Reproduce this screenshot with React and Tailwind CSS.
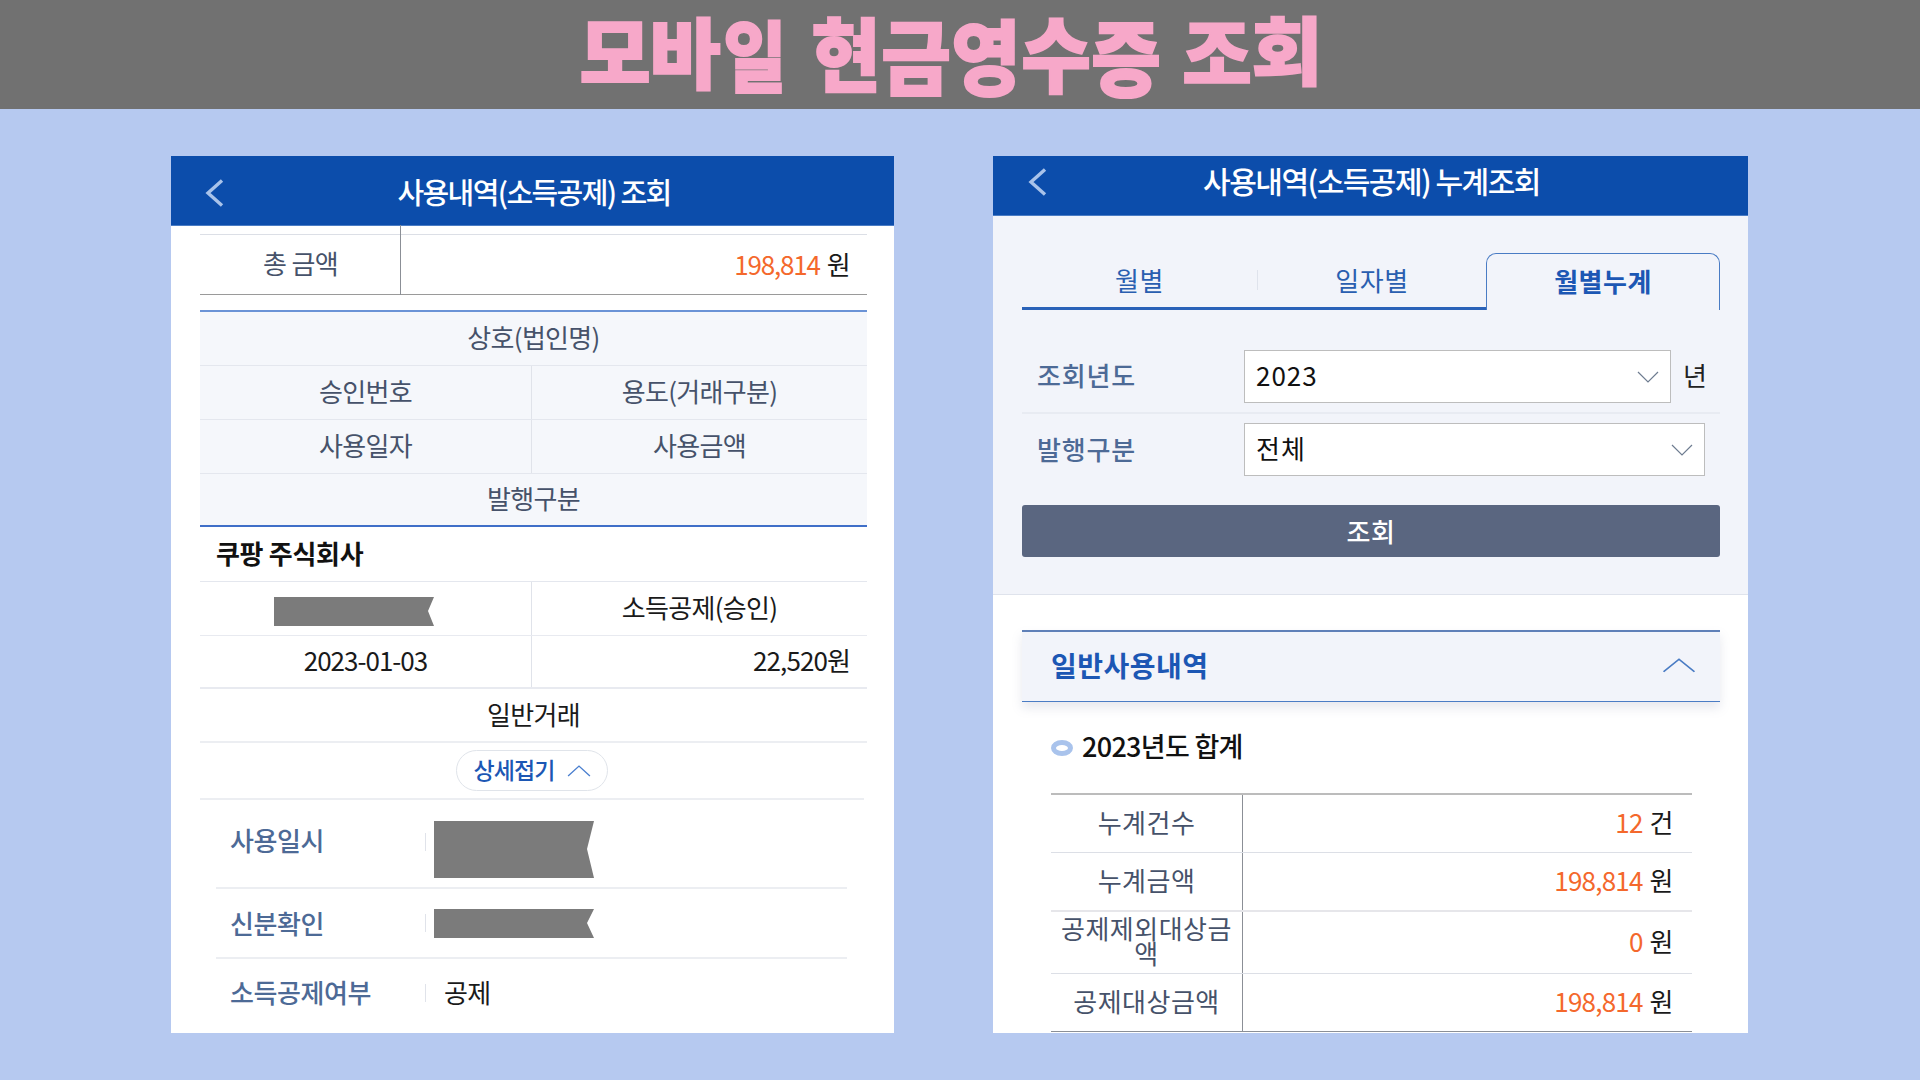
const KR = "font-['Noto_Sans_CJK_KR','Noto_Sans',sans-serif]";

function Chevron({ dir = "down", className = "" }) {
  const d = {
    down: "M1 1 L11 11 L21 1",
    up: "M1 11 L11 1 L21 11",
  }[dir];
  return (
    <svg viewBox="0 0 22 12" fill="none" stroke="currentColor" strokeWidth="1.2" preserveAspectRatio="none" className={className}>
      <path d={d} />
    </svg>
  );
}

function Back() {
  return (
    <svg viewBox="0 0 20 28" fill="none" stroke="#a9c3ea" strokeWidth="3.4" className="w-[20px] h-[28px]">
      <path d="M17 1.5 L3 14 L17 26.5" />
    </svg>
  );
}

const glyphs = [
  ["모", "[transform:translateY(-5px)_scale(.9,.9)]"],
  ["바", "[transform:translateY(-5px)_scale(.9,.9)]"],
  ["일", "[transform:translateY(-2px)_scale(.8,.9)]"],
  [" ", ""],
  ["현", "[transform:translateY(-4px)_scale(.88,.93)]"],
  ["금", "[transform:translateY(-2px)_scale(.88,.94)]"],
  ["영", "[transform:translateY(-1px)_scale(.88,.95)]"],
  ["수", "[transform:translateY(-4px)_scale(.88,.95)]"],
  ["증", "[transform:translateY(-1px)_scale(.88,.96)]"],
  [" ", ""],
  ["조", "[transform:translateY(-5px)_scale(.88,.88)]"],
  ["회", "[transform:translateY(-8px)_scale(.9,.86)]"],
];

function Title() {
  return (
    <h1 className="flex mr-[19px] text-[#f7a8c9] text-[86px] font-black leading-none [-webkit-text-stroke:2px_#f7a8c9]">
      {glyphs.map(([c, cls], i) =>
        c === " " ? (
          <span key={i} className="w-[21px] whitespace-pre"> </span>
        ) : (
          <span key={i} className={`w-[84px] -mx-[7px] flex justify-center ${cls}`}>{c}</span>
        )
      )}
    </h1>
  );
}

function Cell({ children, className = "" }) {
  return <div className={`flex items-center justify-center pb-[4px] ${className}`}>{children}</div>;
}

function LeftPanel() {
  const labelCls = "text-[#46526a]";
  return (
    <section className="w-[723px] h-[877px] bg-white flex flex-col overflow-hidden">
      <header className="relative h-[70px] shrink-0 bg-[#0c4dab] flex items-center justify-center border-b border-[#4a7cc4]">
        <span className="absolute left-[34px] top-[23px]"><Back /></span>
        <span className="text-white text-[29px] font-medium tracking-[-1.6px] ml-[3px] pt-[2px]">사용내역(소득공제) 조회</span>
      </header>
      <div className="ml-[29px] mr-[27px] flex flex-col text-[26px] tracking-[-0.7px]">
        <div className="h-[70px] mt-[-1px] flex pt-[9px] relative">
          <div className="flex-1 flex border-t border-b border-t-[#dcdfe6] border-b-[#9a9a9a]">
            <Cell className={`w-[201px] ${labelCls}`}>총 금액</Cell>
            <div className="flex-1 flex items-center justify-end pr-[17px] pb-[3px] text-[#1a1a1a]">
              <span className="text-[#f4682c] mr-[7px] tracking-[-1.2px]">198,814</span>원
            </div>
          </div>
          <span className="absolute left-[200px] top-0 bottom-0 w-px bg-[#8b8f96]" />
        </div>
        <div className="mt-[15px] border-t-2 border-[#6b93d6] bg-[#f5f7fb]">
          <Cell className={`h-[54px] border-b border-[#e4e7ee] ${labelCls}`}>상호(법인명)</Cell>
          <div className="h-[54px] flex border-b border-[#e4e7ee]">
            <Cell className={`w-[332px] border-r border-[#e0e3ea] ${labelCls}`}>승인번호</Cell>
            <Cell className={`flex-1 ${labelCls}`}>용도(거래구분)</Cell>
          </div>
          <div className="h-[54px] flex border-b border-[#e4e7ee]">
            <Cell className={`w-[332px] border-r border-[#e0e3ea] ${labelCls}`}>사용일자</Cell>
            <Cell className={`flex-1 ${labelCls}`}>사용금액</Cell>
          </div>
          <Cell className={`h-[53px] border-b-2 border-[#3f6fc8] ${labelCls}`}>발행구분</Cell>
        </div>
        <div className="h-[55px] pl-[16px] pb-[4px] flex items-center border-b border-[#e4e7ee] font-bold text-[#111] tracking-[-0.3px]">쿠팡 주식회사</div>
        <div className="h-[54px] flex border-b border-[#e8eaf0]">
          <div className="w-[332px] border-r border-[#e0e3ea] flex items-center pl-[74px] pt-[5px]">
            <svg viewBox="0 0 160 29" className="w-[160px] h-[29px]"><path d="M0 0H160L154 14L160 29H0Z" fill="#7b7b7b" /></svg>
          </div>
          <Cell className="flex-1 text-[#1a1a1a]">소득공제(승인)</Cell>
        </div>
        <div className="h-[53px] flex border-b-2 border-[#e8eaf0] text-[#1a1a1a]">
          <Cell className="w-[332px] border-r border-[#e0e3ea] tracking-[-1px]">2023-01-03</Cell>
          <div className="flex-1 flex items-center justify-end pr-[17px] pb-[4px] tracking-[-0.9px]">22,520원</div>
        </div>
        <Cell className="h-[54px] border-b-2 border-[#eceef2] text-[#1a1a1a]">일반거래</Cell>
        <div className="h-[57px] flex items-center justify-center border-b-2 border-[#eceef2] mr-[3px]">
          <div className="w-[152px] h-[41px] rounded-full border border-[#e0e4ea] flex items-center justify-center gap-[12px] text-[#1c57b4] text-[23px] font-medium tracking-[-0.9px]">
            <span className="pb-[2px]">상세접기</span>
            <Chevron dir="up" className="w-[24px] h-[12px] text-[#4a7fcf]" />
          </div>
        </div>
        <div className="h-[89px] ml-[16px] mr-[20px] flex items-center border-b-2 border-[#eceef2]">
          <span className="w-[209px] text-[#4d6a96] font-medium pb-[8px] pl-[14px] tracking-[-0.4px]">사용일시</span>
          <div className="w-px h-[18px] bg-[#e0e3ea] mb-[4px]" />
          <svg viewBox="0 0 160 57" className="ml-[8px] mt-[11px] w-[160px] h-[57px]"><path d="M0 0H160L153 28L160 57H0Z" fill="#7b7b7b" /></svg>
        </div>
        <div className="h-[70px] ml-[16px] mr-[20px] flex items-center border-b-2 border-[#eceef2]">
          <span className="w-[209px] text-[#4d6a96] font-medium pl-[14px] pb-[2px] tracking-[-0.4px]">신분확인</span>
          <div className="w-px h-[18px] bg-[#e0e3ea]" />
          <svg viewBox="0 0 160 29" className="ml-[8px] w-[160px] h-[29px]"><path d="M0 0H160L153 14L160 29H0Z" fill="#7b7b7b" /></svg>
        </div>
        <div className="h-[68px] ml-[16px] mr-[20px] flex items-center">
          <span className="w-[209px] text-[#4d6a96] font-medium pl-[14px] pb-[4px] tracking-[-0.4px]">소득공제여부</span>
          <div className="w-px h-[18px] bg-[#e0e3ea]" />
          <span className="ml-[18px] text-[#1a1a1a] pb-[4px]">공제</span>
        </div>
      </div>
    </section>
  );
}

function SelectBox({ value, className = "" }) {
  return (
    <div className={`h-[53px] bg-white border border-[#bdbdbd] flex items-center justify-between pl-[11px] pr-[11px] text-[#111] text-[26px] tracking-[1px] ${className}`}>
      <span className="pb-[5px]">{value}</span>
      <Chevron className="w-[22px] h-[12px] text-[#6e7c90]" />
    </div>
  );
}

function Stat({ label, value, unit, className = "" }) {
  return (
    <div className={`flex ${className}`}>
      <div className="w-[192px] flex items-center justify-center text-center px-[8px] pb-[5px] leading-[25px] text-[#46526a] border-r border-[#8b8f96]">{label}</div>
      <div className="flex-1 flex items-center justify-end pr-[18px] pb-[5px] text-[#1a1a1a]">
        <span className="text-[#f4682c] mr-[7px] tracking-[-0.8px]">{value}</span>{unit}
      </div>
    </div>
  );
}

function RightPanel() {
  return (
    <section className="w-[755px] h-[877px] bg-white flex flex-col overflow-hidden">
      <header className="relative h-[60px] shrink-0 bg-[#0c4dab] flex items-center justify-center border-b border-[#4a7cc4]">
        <span className="absolute left-[35px] top-[12px]"><Back /></span>
        <span className="text-white text-[30px] font-medium tracking-[-1.5px] pb-[10px] ml-[2px]">사용내역(소득공제) 누계조회</span>
      </header>
      <div className="h-[379px] shrink-0 bg-[#f2f4fa] border-b border-[#dfe3ec] pl-[29px] pr-[28px] text-[26px] tracking-[0.5px]">
        <div className="mt-[37px] h-[57px] flex text-[#2a5fb0]">
          <div className="flex-1 flex items-center border-b-[3px] border-[#2a62b8]">
            <span className="w-[235px] text-center pb-[2px]">월별</span>
            <span className="w-px h-[20px] bg-[#dfe3ec]" />
            <span className="flex-1 text-center pb-[2px]">일자별</span>
          </div>
          <div className="w-[234px] h-[57px] flex items-center justify-center pb-[3px] rounded-t-[10px] border border-b-0 border-[#4a7cc4] font-bold text-[#1c57b4] bg-[#f2f4fa]">월별누계</div>
        </div>
        <div className="mt-[40px] h-[64px] flex items-start border-b-2 border-[#e8ebf2]">
          <span className="w-[222px] h-[53px] flex items-center pl-[15px] pb-[4px] text-[#4d6a96] font-medium tracking-[0.8px]">조회년도</span>
          <SelectBox value="2023" className="w-[427px]" />
          <span className="ml-[12px] h-[53px] pb-[4px] flex items-center text-[#222]">년</span>
        </div>
        <div className="mt-[9px] h-[53px] flex">
          <span className="w-[222px] flex items-center pl-[15px] pb-[2px] text-[#4d6a96] font-medium tracking-[0.8px]">발행구분</span>
          <SelectBox value="전체" className="w-[461px]" />
        </div>
        <button className="mt-[29px] w-full h-[52px] rounded-[3px] bg-[#5a6680] text-white font-medium flex items-center justify-center pb-[2px]">조회</button>
      </div>
      <div className="pl-[29px] pr-[28px] pt-[35px] text-[26px] tracking-[0.5px]">
        <div className="h-[72px] flex items-center justify-between bg-[#f2f4fa] border-t-2 border-b border-t-[#5f80b8] border-b-[#4a7cc4] shadow-[0_6px_10px_rgba(120,130,160,0.18)] pl-[29px] pr-[24px]">
          <span className="text-[#1c57b4] text-[28px] font-bold tracking-[0.5px] pb-[3px]">일반사용내역</span>
          <Chevron dir="up" className="w-[34px] h-[15px] mb-[3px] text-[#4a7cc4]" />
        </div>
        <div className="mt-[29px] h-[30px] pl-[29px] flex items-center gap-[9px]">
          <span className="w-[22px] h-[16px] mt-[3px] rounded-[50%] border-[5px] border-[#a9c3ec] bg-white" />
          <span className="text-[#111] text-[27px] font-medium tracking-[-0.7px]">2023년도 합계</span>
        </div>
        <div className="mt-[32px] ml-[29px] w-[641px] border-t-2 border-[#bcbcbc]">
          <Stat label="누계건수" value="12" unit="건" className="h-[58px] border-b border-[#dcdfe6]" />
          <Stat label="누계금액" value="198,814" unit="원" className="h-[59px] border-b-2 border-[#e6e6ea]" />
          <Stat label="공제제외대상금액" value="0" unit="원" className="h-[62px] border-b border-[#dcdfe6]" />
          <Stat label="공제대상금액" value="198,814" unit="원" className="h-[58px] border-b border-[#8b8f96]" />
        </div>
      </div>
    </section>
  );
}

export default function App() {
  return (
    <div className={`w-[1920px] h-[1080px] bg-[#b6c9f0] overflow-hidden flex flex-col ${KR}`}>
      <div className="h-[109px] shrink-0 bg-[#717171] flex items-center justify-center">
        <Title />
      </div>
      <div className="pt-[47px] pl-[171px] flex gap-[99px]">
        <LeftPanel />
        <RightPanel />
      </div>
    </div>
  );
}
